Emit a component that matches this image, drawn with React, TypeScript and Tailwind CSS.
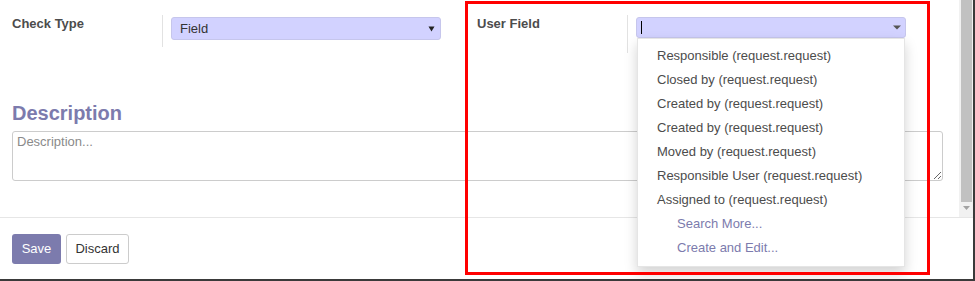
const options = [
  'Responsible (request.request)',
  'Closed by (request.request)',
  'Created by (request.request)',
  'Created by (request.request)',
  'Moved by (request.request)',
  'Responsible User (request.request)',
  'Assigned to (request.request)',
];

const FieldRow = ({
  label,
  sepHeight,
  children,
}: {
  label: string;
  sepHeight: string;
  children: React.ReactNode;
}) => (
  <div className="flex w-[465px] items-start">
    <div className="w-[150px] text-[13px] leading-[18px] font-bold text-[#4c4c4c]">{label}</div>
    <div className={`border-l border-[#e2e2e2] pl-[8px] pt-[2px] ${sepHeight}`}>{children}</div>
  </div>
);

export default function App() {
  return (
    <div className="relative w-[975px] h-[281px] overflow-hidden bg-white border-r-2 border-b-2 border-[#3a3a3a] font-['Liberation_Sans',Arial,sans-serif] text-[13px] text-[#4c4c4c]">
      {/* Form body */}
      <div className="flex h-[218px] border-b border-[#e6e6e6]">
        <div className="flex-1 pl-3 pt-[15px]">
          <div className="flex">
            <FieldRow label="Check Type" sepHeight="h-[32px]">
              <div className="flex h-[23px] w-[270px] items-center justify-between rounded-[3px] border border-[#c6c6ec] bg-[#d2d2ff] pl-[8px] pr-[5px] text-[#333]">
                <span>Field</span>
                <svg width="7" height="6" viewBox="0 0 7 6">
                  <path d="M0.5 0.5 H6.5 L3.5 5.5 Z" fill="#222" />
                </svg>
              </div>
            </FieldRow>
            <FieldRow label="User Field" sepHeight="h-[38px]">
              <div className="flex h-[21px] w-[270px] items-center justify-between rounded-[3px] border border-[#c6c6ec] bg-[#d2d2ff] pl-[4px] pr-[4px]">
                <span className="block h-[13px] w-px bg-black" />
                <svg width="8" height="5" viewBox="0 0 8 5">
                  <path d="M0 0.5 H8 L4 4.5 Z" fill="#555" />
                </svg>
              </div>
            </FieldRow>
          </div>

          <h2 className="mt-[48px] text-[20px] leading-[24px] font-bold text-[#7c7bad]">Description</h2>
          <textarea
            placeholder="Description..."
            className="mt-[6px] block h-[50px] w-[931px] resize-y rounded-[3px] border border-[#cccccc] px-[4px] pt-[1px] text-[13px] leading-[18px] text-[#333] outline-none placeholder:text-[#8a8a8a]"
          />
        </div>

        {/* Scrollbar */}
        <div className="flex w-[14px] flex-col bg-[#f1f1f1]">
          <div className="ml-[2px] h-[202px] w-[11px] bg-[#c1c1c1]" />
          <div className="flex justify-center pt-[4px] pl-[1px]">
            <svg width="7" height="4" viewBox="0 0 7 4">
              <path d="M0 0 H7 L3.5 4 Z" fill="#a3a3a3" />
            </svg>
          </div>
        </div>
      </div>

      {/* Footer */}
      <div className="flex gap-[5px] px-3 pt-[16px]">
        <button className="h-[30px] w-[49px] rounded-[3px] bg-[#7c7bad] text-[13px] text-white">Save</button>
        <button className="h-[30px] w-[63px] rounded-[3px] border border-[#cccccc] bg-white text-[13px] text-[#333]">
          Discard
        </button>
      </div>

      {/* Autocomplete dropdown */}
      <div className="absolute left-[637px] top-[38px] w-[268px] border border-black/10 bg-white pt-[5px] pb-[6px] shadow-[0_6px_12px_rgba(0,0,0,0.175)]">
        {options.map((o, i) => (
          <div key={i} className="h-6 pl-[19px] leading-6 whitespace-nowrap text-[#4c4c4c]">
            {o}
          </div>
        ))}
        <div className="h-6 pl-[39px] leading-6 text-[#7c7bad]">Search More...</div>
        <div className="h-6 pl-[39px] leading-6 text-[#7c7bad]">Create and Edit...</div>
      </div>

      {/* Annotation box */}
      <div className="pointer-events-none absolute left-[465px] top-[1px] h-[274px] w-[465px] border-[3px] border-[#ff0000]" />
    </div>
  );
}
